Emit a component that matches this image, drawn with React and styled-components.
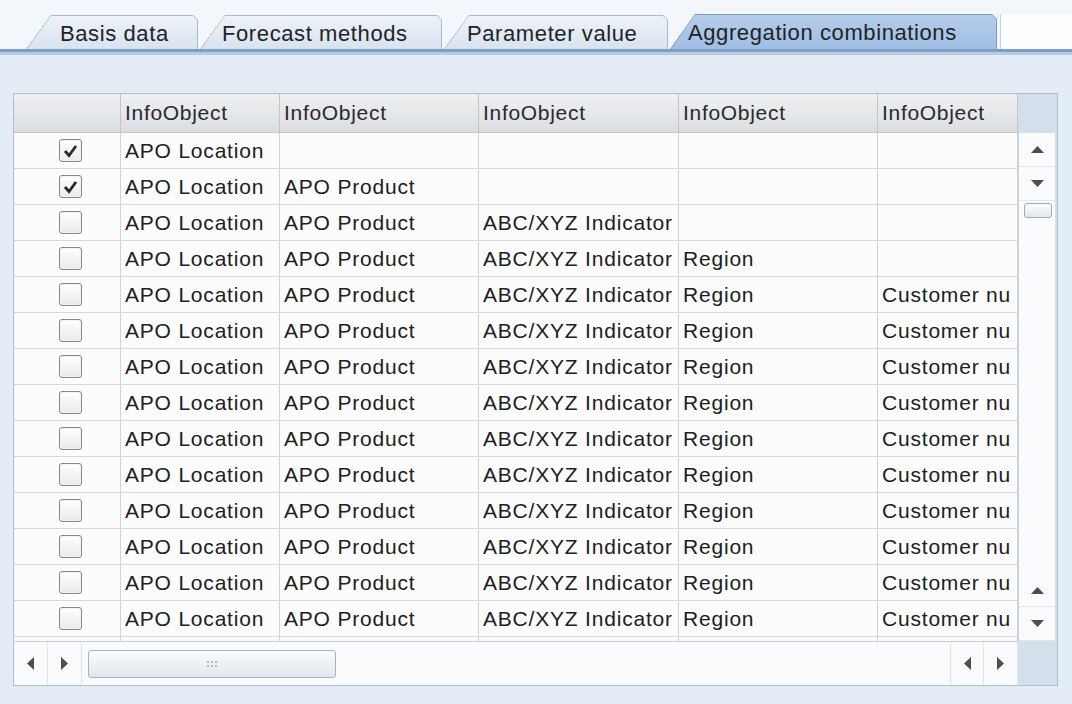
import React from "react";
import styled, { createGlobalStyle } from "styled-components";

const GlobalStyle = createGlobalStyle`
  html, body {
    margin: 0;
    padding: 0;
  }
  body {
    background: #f3f7fb;
    font-family: "Liberation Sans", Arial, sans-serif;
    color: #1f1f1f;
  }
`;

const COLS = "107px 159px 199px 200px 199px 140px";

const Screen = styled.div`
  width: 1072px;
  height: 704px;
  display: flex;
  flex-direction: column;
  overflow: hidden;
`;

const TabStrip = styled.div`
  height: 49px;
  display: flex;
  align-items: flex-end;
  gap: 2px;
  padding-left: 26px;
  box-sizing: border-box;
`;

const TabEdge = styled.div`
  width: ${(p) => p.$width}px;
  height: ${(p) => (p.$active ? 35 : 34)}px;
  box-sizing: border-box;
  padding: 1px 1px 0 1px;
  display: flex;
  background: ${(p) => (p.$active ? "#7c9cc3" : "#a6bad0")};
  clip-path: polygon(0 100%, 25px 0, calc(100% - 5px) 0, 100% 5px, 100% 100%);
`;

const TabFace = styled.div`
  flex: 1;
  display: flex;
  align-items: center;
  padding: 2px 0 0 ${(p) => p.$pad}px;
  font-size: 22px;
  letter-spacing: 0.6px;
  white-space: nowrap;
  color: #1f2328;
  background: ${(p) =>
    p.$active
      ? "linear-gradient(#b5cdea, #9fbee3)"
      : "linear-gradient(#eef3f8, #d8e3ee)"};
  clip-path: polygon(0 100%, 24px 0, calc(100% - 4px) 0, 100% 4px, 100% 100%);
`;

const TabEnd = styled.div`
  flex: 1;
  height: 35px;
  margin-left: 1px;
  background: #fdfeff;
  border-left: 1px solid #c4d2e1;
`;

const TabLine = styled.div`
  height: 3px;
  background: #7d9ec5;
  border-bottom: 3px solid #b6cae1;
`;

const Panel = styled.div`
  flex: 1;
  background: #e4edf6;
  padding: 38px 0 0 13px;
`;

const Frame = styled.div`
  width: 1045px;
  height: 593px;
  box-sizing: border-box;
  border: 1px solid #b1bfcd;
  display: grid;
  grid-template-columns: 1004px 39px;
  grid-template-rows: 547px 44px;
  background: #fbfcfd;
`;

const TableArea = styled.div`
  display: flex;
  flex-direction: column;
  overflow: hidden;
`;

const HeaderRow = styled.div`
  display: grid;
  grid-template-columns: ${COLS};
  height: 39px;
`;

const HeaderCell = styled.div`
  display: flex;
  align-items: center;
  padding-left: 4px;
  box-sizing: border-box;
  font-size: 21px;
  letter-spacing: 0.7px;
  color: #2a2a2a;
  background: linear-gradient(#eef0f2, #dcdfe2);
  border-right: 1px solid #c2c6ca;
  border-bottom: 1px solid #c2c6ca;
  white-space: nowrap;
  overflow: hidden;
`;

const Body = styled.div`
  height: 508px;
  overflow: hidden;
`;

const Row = styled.div`
  display: grid;
  grid-template-columns: ${COLS};
  height: 36px;
`;

const Cell = styled.div`
  display: flex;
  align-items: center;
  justify-content: ${(p) => (p.$center ? "center" : "flex-start")};
  padding-left: ${(p) => (p.$center ? 6 : 4)}px;
  box-sizing: border-box;
  font-size: 21px;
  letter-spacing: 0.8px;
  color: #202020;
  background: #fcfcfc;
  border-right: 1px solid #cfd3d7;
  border-bottom: 1px solid #d6d9dc;
  white-space: nowrap;
  overflow: hidden;
`;

const Box = styled.div`
  width: 23px;
  height: 23px;
  box-sizing: border-box;
  border: 1px solid #878787;
  border-radius: 3px;
  background: linear-gradient(#ffffff, #eaeaea);
  box-shadow: inset 0 0 0 1px #f4f4f4;
  display: flex;
  align-items: center;
  justify-content: center;
`;

const VScroll = styled.div`
  display: flex;
  flex-direction: column;
`;

const ScrollCorner = styled.div`
  height: ${(p) => p.$h}px;
  background: #d3dfeb;
  flex: ${(p) => (p.$h ? "none" : 1)};
`;

const VTrack = styled.div`
  flex: 1;
  display: flex;
  flex-direction: column;
  background: #f9fbfc;
  border-left: 1px solid #c8d1da;
  border-right: 2px solid #d3dfeb;
`;

const VButton = styled.div`
  height: ${(p) => p.$h}px;
  display: flex;
  align-items: center;
  justify-content: center;
  border-bottom: 1px solid #e1e7ed;
  box-sizing: border-box;
`;

const VThumb = styled.div`
  height: 13px;
  margin: 2px 3px 0 5px;
  border: 1px solid #9eabb8;
  border-radius: 3px;
  background: linear-gradient(#fbfcfd, #e2e8ee);
`;

const Spacer = styled.div`
  flex: 1;
`;

const HScroll = styled.div`
  display: flex;
  align-items: center;
  background: #f9fbfc;
  border-top: 1px solid #c8d1da;
`;

const HButton = styled.div`
  width: 34px;
  height: 100%;
  display: flex;
  align-items: center;
  justify-content: center;
  box-sizing: border-box;
  border-right: 1px solid #dfe5eb;
  border-left: ${(p) => (p.$lead ? "1px solid #dfe5eb" : "none")};
`;

const HThumb = styled.div`
  width: 248px;
  height: 28px;
  margin-left: 6px;
  box-sizing: border-box;
  border: 1px solid #a7b3c0;
  border-radius: 3px;
  background: linear-gradient(#fafbfc, #e1e7ed);
  display: flex;
  align-items: center;
  justify-content: center;
`;

const Arrow = ({ dir }) => {
  const pts = {
    up: "0,7 6.5,0 13,7",
    down: "0,0 13,0 6.5,7",
    left: "7,0 7,13 0,6.5",
    right: "0,0 7,6.5 0,13",
  }[dir];
  const vertical = dir === "up" || dir === "down";
  return (
    <svg width={vertical ? 13 : 7} height={vertical ? 7 : 13}>
      <polygon points={pts} fill="#4b4f55" />
    </svg>
  );
};

const Check = () => (
  <svg width="15" height="14" viewBox="0 0 15 14">
    <path d="M2 7 L6 11.5 L13 2" fill="none" stroke="#2a2a2a" strokeWidth="2.8" />
  </svg>
);

const Grip = () => (
  <svg width="11" height="6">
    {[0, 4, 8].map((x) =>
      [0, 4].map((y) => <rect key={`${x}-${y}`} x={x} y={y} width="2" height="2" fill="#b3bcc6" />)
    )}
  </svg>
);

const tabs = [
  { label: "Basis data", width: 172, pad: 33 },
  { label: "Forecast methods", width: 242, pad: 21 },
  { label: "Parameter value", width: 224, pad: 22 },
  { label: "Aggregation combinations", width: 327, pad: 17, active: true },
];

const full = ["APO Location", "APO Product", "ABC/XYZ Indicator", "Region", "Customer nu"];

const rows = [
  { checked: true, values: full.slice(0, 1) },
  { checked: true, values: full.slice(0, 2) },
  { checked: false, values: full.slice(0, 3) },
  { checked: false, values: full.slice(0, 4) },
  ...Array.from({ length: 10 }, () => ({ checked: false, values: full })),
  { checked: false, values: [] },
];

export default function App() {
  return (
    <>
      <GlobalStyle />
      <Screen>
        <TabStrip>
          {tabs.map((t) => (
            <TabEdge key={t.label} $width={t.width} $active={t.active}>
              <TabFace $pad={t.pad} $active={t.active}>
                {t.label}
              </TabFace>
            </TabEdge>
          ))}
          <TabEnd />
        </TabStrip>
        <TabLine />
        <Panel>
          <Frame>
            <TableArea>
              <HeaderRow>
                <HeaderCell />
                {Array.from({ length: 5 }, (_, i) => (
                  <HeaderCell key={i}>InfoObject</HeaderCell>
                ))}
              </HeaderRow>
              <Body>
                {rows.map((r, i) => (
                  <Row key={i}>
                    <Cell $center>
                      <Box>{r.checked && <Check />}</Box>
                    </Cell>
                    {Array.from({ length: 5 }, (_, c) => (
                      <Cell key={c}>{r.values[c] || ""}</Cell>
                    ))}
                  </Row>
                ))}
              </Body>
            </TableArea>
            <VScroll>
              <ScrollCorner $h={39} />
              <VTrack>
                <VButton $h={34}>
                  <Arrow dir="up" />
                </VButton>
                <VButton $h={34}>
                  <Arrow dir="down" />
                </VButton>
                <VThumb />
                <Spacer />
                <VButton $h={33}>
                  <Arrow dir="up" />
                </VButton>
                <VButton $h={34}>
                  <Arrow dir="down" />
                </VButton>
              </VTrack>
            </VScroll>
            <HScroll>
              <HButton>
                <Arrow dir="left" />
              </HButton>
              <HButton>
                <Arrow dir="right" />
              </HButton>
              <HThumb>
                <Grip />
              </HThumb>
              <Spacer />
              <HButton $lead>
                <Arrow dir="left" />
              </HButton>
              <HButton>
                <Arrow dir="right" />
              </HButton>
            </HScroll>
            <ScrollCorner />
          </Frame>
        </Panel>
      </Screen>
    </>
  );
}
